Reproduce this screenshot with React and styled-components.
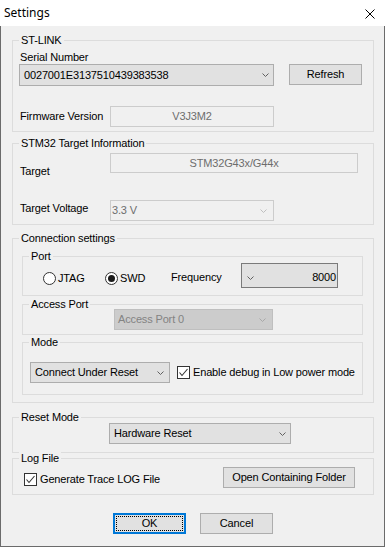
import React from 'react';
import styled, { createGlobalStyle } from 'styled-components';

const GlobalStyles = createGlobalStyle`
* {
  margin: 0;
  padding: 0;
  box-sizing: border-box;
}
html, body {
  background: #f0f0f0;
}
body {
  font-family: 'Liberation Sans', Arial, sans-serif;
  font-size: 11px;
  line-height: 13px;
  letter-spacing: -0.15px;
  color: #000;
}
`;

const combo = {
  normal: { border: '#adadad', bg: '#e1e1e1', color: '#000', chev: '#606060' },
  dark: { border: '#7a7a7a', bg: '#e1e1e1', color: '#000', chev: '#606060' },
  off: { border: '#cccccc', bg: '#f0f0f0', color: '#6d6d6d', chev: '#bfbfbf' },
  dim: { border: '#bfbfbf', bg: '#cccccc', color: '#838383', chev: '#a8a8a8' },
};

const Window = styled.div`
  width: 385px;
  height: 547px;
  display: flex;
  flex-direction: column;
`;

const TitleBar = styled.div`
  height: 26px;
  flex: none;
  background: #fff;
  display: flex;
  justify-content: space-between;
  align-items: flex-start;
  padding-left: 4px;
`;

const Title = styled.span`
  font-family: 'Noto Sans', 'Open Sans', sans-serif;
  font-size: 12px;
  line-height: 26px;
  letter-spacing: 0;
`;

const Close = styled.svg`
  margin: 9px 10px 0 0;
`;

const Body = styled.div`
  flex: 1;
  border: 1px solid #6b6b6b;
  border-top: none;
  padding: 0 10px 0 11px;
  display: flex;
  flex-direction: column;
`;

const Box = styled.div`
  position: relative;
  flex: none;
  height: ${p => p.$h}px;
  margin: ${p => p.$mt || 0}px 0 0 0;
  border: 1px solid #dcdcdc;
  padding: ${p => p.$pad || '0'};
`;

const Caption = styled.span`
  position: absolute;
  top: -7px;
  left: 6px;
  padding: 0 2px;
  background: #f0f0f0;
  white-space: nowrap;
`;

const Group = ({ title, children, ...rest }) => (
  <Box {...rest}>
    <Caption>{title}</Caption>
    {children}
  </Box>
);

const Row = styled.div`
  display: flex;
  align-items: ${p => p.$align || 'flex-start'};
  justify-content: ${p => p.$justify || 'flex-start'};
  gap: ${p => p.$gap || 0}px;
  margin-top: ${p => p.$mt || 0}px;
`;

const Label = styled.span`
  flex: none;
  width: ${p => (p.$w ? `${p.$w}px` : 'auto')};
  margin-left: ${p => p.$ml || 0}px;
  margin-top: ${p => p.$mt || 0}px;
  white-space: nowrap;
`;

const ComboBox = styled.div`
  flex: none;
  display: flex;
  align-items: center;
  width: ${p => p.$w}px;
  height: ${p => p.$h || 21}px;
  padding-top: ${p => p.$pt || 0}px;
  align-items: ${p => (p.$pt ? 'flex-start' : 'center')};
  border: 1px solid ${p => combo[p.$kind || 'normal'].border};
  background: ${p => combo[p.$kind || 'normal'].bg};
  color: ${p => combo[p.$kind || 'normal'].color};
  padding-left: ${p => (p.$pl != null ? p.$pl : 4)}px;
  padding-right: ${p => p.$pr || 0}px;
  white-space: nowrap;
`;

const ComboText = styled.span`
  flex: 1;
  text-align: ${p => p.$align || 'left'};
`;

const ChevronBox = styled.svg`
  flex: none;
  margin: ${p => (p.$pt ? `${p.$pt}px` : 0)} ${p => p.$mr || 0}px 0 ${p => p.$ml || 0}px;
`;

const Chevron = ({ color, ...rest }) => (
  <ChevronBox width="7" height="4" viewBox="0 0 7 4" {...rest}>
    <polyline points="0.5,0.5 3.5,3.5 6.5,0.5" fill="none" stroke={color} strokeWidth="1" />
  </ChevronBox>
);

const Combo = ({ kind = 'normal', text, chevMr = 4, ...rest }) => (
  <ComboBox $kind={kind} {...rest}>
    <ComboText>{text}</ComboText>
    <Chevron color={combo[kind].chev} $mr={chevMr} />
  </ComboBox>
);

const Field = styled.div`
  flex: none;
  width: ${p => p.$w}px;
  height: ${p => p.$h || 21}px;
  border: 1px solid #cccccc;
  background: #f0f0f0;
  color: #6d6d6d;
  display: flex;
  align-items: center;
  justify-content: center;
`;

const Button = styled.button`
  flex: none;
  position: relative;
  width: ${p => p.$w || 73}px;
  height: 21px;
  font: inherit;
  letter-spacing: inherit;
  color: #000;
  background: #e1e1e1;
  border: ${p => (p.$focus ? '2px solid #0078d7' : '1px solid #adadad')};
  display: flex;
  align-items: center;
  justify-content: center;
  &::after {
    content: '';
    display: ${p => (p.$focus ? 'block' : 'none')};
    position: absolute;
    inset: 1px;
    border: 1px dotted #000;
  }
`;

const Option = styled.label`
  flex: none;
  display: flex;
  align-items: center;
  gap: ${p => p.$gap || 2}px;
  width: ${p => (p.$w ? `${p.$w}px` : 'auto')};
  margin-top: ${p => p.$mt || 0}px;
  margin-left: ${p => p.$ml || 0}px;
  white-space: nowrap;
`;

const RadioDot = styled.span`
  flex: none;
  width: 13px;
  height: 13px;
  border-radius: 50%;
  border: 1px solid #333;
  background: #fff;
  display: flex;
  align-items: center;
  justify-content: center;
  &::after {
    content: '';
    display: ${p => (p.$on ? 'block' : 'none')};
    width: 7px;
    height: 7px;
    border-radius: 50%;
    background: #1a1a1a;
  }
`;

const CheckSquare = styled.span`
  flex: none;
  width: 13px;
  height: 13px;
  border: 1px solid #333;
  background: #fff;
  display: flex;
  align-items: center;
  justify-content: center;
`;

const Check = () => (
  <CheckSquare>
    <svg width="11" height="11" viewBox="0 0 11 11">
      <polyline points="1.5,5.5 4,8.5 9.5,2" fill="none" stroke="#333" strokeWidth="1.1" />
    </svg>
  </CheckSquare>
);

const Footer = styled.div`
  display: flex;
  gap: 14px;
  margin-top: 18px;
  padding-left: 101px;
`;

export default function App() {
  return (
    <>
      <GlobalStyles />
      <Window>
        <TitleBar>
          <Title>Settings</Title>
          <Close width="10" height="10" viewBox="0 0 10 10">
            <path d="M0.5 0.5 L9.5 9.5 M9.5 0.5 L0.5 9.5" stroke="#000" strokeWidth="1" />
          </Close>
        </TitleBar>
        <Body>
          <Group title="ST-LINK" $mt={14} $h={92} $pad="10px 0 0 6px">
            <Label $ml={1}>Serial Number</Label>
            <Row $gap={15}>
              <Combo text="0027001E3137510439383538" $w={255} $h={22} />
              <Button $w={73}>Refresh</Button>
            </Row>
            <Row $mt={20} $align="center">
              <Label $ml={1} $w={90}>Firmware Version</Label>
              <Field $w={164}>V3J3M2</Field>
            </Row>
          </Group>

          <Group title="STM32 Target Information" $mt={11} $h={82} $pad="9px 0 0 6px">
            <Row>
              <Label $ml={1} $w={90} $mt={12}>Target</Label>
              <Field $w={248} $h={20}>STM32G43x/G44x</Field>
            </Row>
            <Row $mt={22}>
              <Label $ml={1} $w={90} $mt={2}>Target Voltage</Label>
              <Combo kind="off" text="3.3 V" $w={164} $pl={1} chevMr={6} />
            </Row>
          </Group>

          <Group title="Connection settings" $mt={13} $h={165} $pad="0 10px 0 9px">
            <Group title="Port" $mt={17} $h={40} $pad="6px 0 0 20px">
              <Row>
                <Option $w={62} $mt={9}>
                  <RadioDot />
                  JTAG
                </Option>
                <Option $w={66} $mt={9}>
                  <RadioDot $on />
                  SWD
                </Option>
                <Label $w={70} $mt={8}>Frequency</Label>
                <ComboBox $kind="dark" $w={97} $h={25} $pl={0} $pr={1} $pt={7}>
                  <Chevron color={combo.dark.chev} $ml={5} $pt={5} />
                  <ComboText $align="right">8000</ComboText>
                </ComboBox>
              </Row>
            </Group>
            <Group title="Access Port" $mt={8} $h={31} $pad="4px 0 0 91px">
              <Combo kind="dim" text="Access Port 0" $w={159} $pl={3} chevMr={6} />
            </Group>
            <Group title="Mode" $mt={7} $h={53} $pad="19px 0 0 7px">
              <Row $align="center">
                <Combo text="Connect Under Reset" $w={140} chevMr={5} />
                <Option $ml={7} $gap={3}>
                  <Check />
                  Enable debug in Low power mode
                </Option>
              </Row>
            </Group>
          </Group>

          <Group title="Reset Mode" $mt={14} $h={36} $pad="5px 0 0 96px">
            <Combo text="Hardware Reset" $w={182} />
          </Group>

          <Group title="Log File" $mt={5} $h={37} $pad="8px 18px 0 11px">
            <Row $justify="space-between">
              <Option $mt={6} $gap={3}>
                <Check />
                Generate Trace LOG File
              </Option>
              <Button $w={132}>Open Containing Folder</Button>
            </Row>
          </Group>

          <Footer>
            <Button $focus>OK</Button>
            <Button>Cancel</Button>
          </Footer>
        </Body>
      </Window>
    </>
  );
}
